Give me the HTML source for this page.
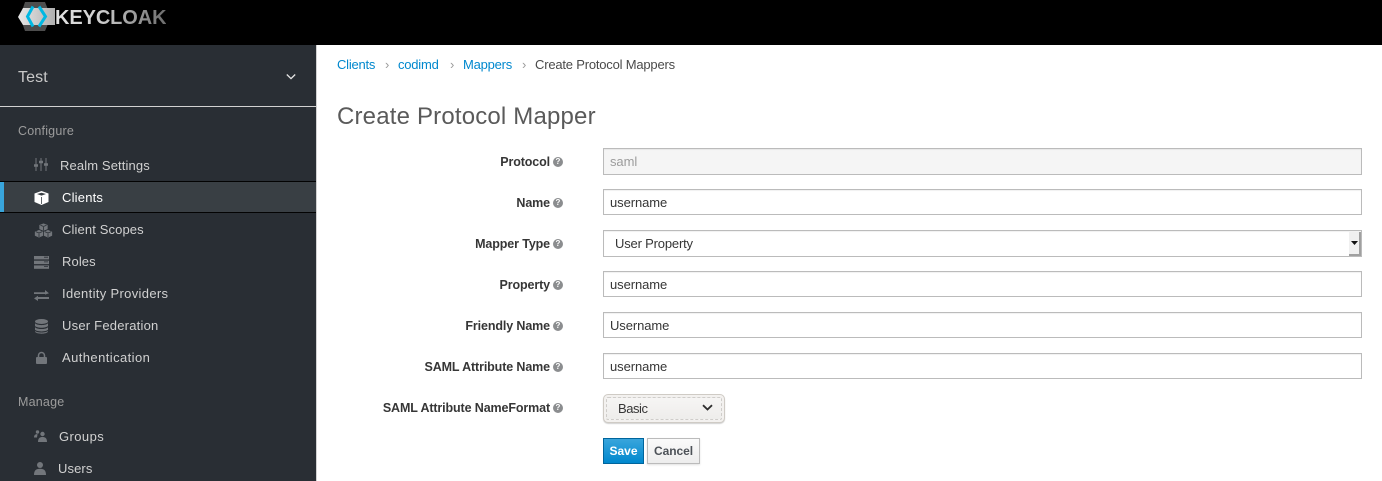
<!DOCTYPE html>
<html><head><meta charset="utf-8"><title>Create Protocol Mapper</title>
<style>
html,body{margin:0;padding:0;width:1382px;height:481px;overflow:hidden;background:#fff}
body{position:relative;font-family:"Liberation Sans",sans-serif;font-size:13px;color:#363636}
.t{position:absolute;white-space:nowrap;line-height:16px}
.abs{position:absolute;box-sizing:border-box}
.nav{color:#d1d1d1;letter-spacing:.15px}
.lnk{color:#0088ce;letter-spacing:-.22px}
.lb{font-weight:bold;font-size:12.5px;right:832px;letter-spacing:-.12px}
.q{position:absolute;left:553px;width:10px;height:10px;border-radius:50%;background:#8b8d8f;color:#fff;font:bold 8px/10px "Liberation Sans",sans-serif;text-align:center}
.in{position:absolute;left:603px;width:759px;box-sizing:border-box;border:1px solid #bbb;height:26px;background:#fff;box-shadow:inset 0 1px 1px rgba(3,3,3,.06)}
.v{left:610px;letter-spacing:-.08px;color:#363636}
svg{position:absolute;overflow:visible}
</style></head><body>
<div class="abs" style="left:0;top:0;width:1382px;height:45px;background:#000"></div>
<svg style="left:17px;top:2px" width="38" height="30" viewBox="0 0 38 30">
<defs><linearGradient id="g" x1="0" x2="1" y1="0" y2="0"><stop offset="0" stop-color="#e8e8e8"/><stop offset="1" stop-color="#b0b0b0"/></linearGradient></defs>
<polygon points="8,0 28,0 34,15 28,29 8,29 3,15" fill="#4d4d4d"/>
<polygon points="6,6 38,6 38,23 6,23 1,15" fill="url(#g)"/>
<path d="M16 4.500 L10.500 14.500 L16 24.500 M22 4.500 L28.500 14.500 L22 24.500" fill="none" stroke="#00b8e3" stroke-width="3"/>
</svg>
<div class="t" style="left:55px;top:6px;font-size:20px;line-height:24px;font-weight:bold;letter-spacing:-.1px;background:linear-gradient(90deg,#e2e2e2 0,#d0d0d0 40%,#6c6c6c 100%);-webkit-background-clip:text;background-clip:text;color:transparent">KEYCLOAK</div>

<div class="abs" style="left:0;top:45px;width:316px;height:436px;background:#292e34"></div>
<div class="abs" style="left:316px;top:45px;width:1px;height:436px;background:#d1d1d1"></div>
<div class="t" style="left:18px;top:69px;font-size:16px;line-height:18px;color:#c8c8c8;letter-spacing:.1px">Test</div>
<svg style="left:286px;top:73px" width="10" height="8"><path d="M.8 1.500 L5 5.600 L9.200 1.500" fill="none" stroke="#e4e4e4" stroke-width="1.300"/></svg>
<div class="abs" style="left:0;top:106px;width:316px;height:1px;background:#d1d1d1"></div>
<div class="t" style="left:18px;top:123px;color:#9c9c9c;letter-spacing:.2px;font-size:12.5px">Configure</div>
<div class="abs" style="left:0;top:181px;width:316px;height:32px;background:#393f44;border-top:1px solid #030303;border-bottom:1px solid #030303"></div>
<div class="abs" style="left:0;top:182px;width:4px;height:30px;background:#39a5dc"></div>

<div class="t nav" style="left:60px;top:158px;letter-spacing:.12px">Realm Settings</div>
<div class="t nav" style="left:62px;top:190px;color:#fff;letter-spacing:.2px">Clients</div>
<div class="t nav" style="left:62px;top:222px;letter-spacing:.12px">Client Scopes</div>
<div class="t nav" style="left:62px;top:254px;letter-spacing:.1px">Roles</div>
<div class="t nav" style="left:62px;top:286px;letter-spacing:.33px">Identity Providers</div>
<div class="t nav" style="left:62px;top:318px;letter-spacing:.22px">User Federation</div>
<div class="t nav" style="left:62px;top:350px;letter-spacing:.42px">Authentication</div>
<div class="t" style="left:18px;top:394px;color:#9c9c9c;letter-spacing:.2px;font-size:12.5px">Manage</div>
<div class="t nav" style="left:59px;top:429px;letter-spacing:.42px">Groups</div>
<div class="t nav" style="left:58px;top:461px;letter-spacing:.1px">Users</div>

<!-- sidebar icons -->
<svg style="left:34px;top:158px" width="14" height="14" fill="none" stroke="#72767b"><path d="M2 0V13M7 0V13M12 0V13" stroke-width="1"/><path d="M0 7.500H4M5 4H9M10 6.500H14" stroke-width="2.400"/></svg>
<svg style="left:34px;top:191px" width="15" height="14"><path d="M7.500 0 L14.500 2.500 V11 L7.500 14 L.5 11 V2.500Z" fill="#fff"/><path d="M3 3 L7.500 1.700 L12 3 L7.500 4.600Z" fill="#393f44"/><path d="M7.500 6 V13" stroke="#393f44" stroke-width=".8"/></svg>
<svg style="left:34px;top:223px" width="19" height="15"><g fill="#72767b" stroke="#292e34" stroke-width=".7"><path d="M9.500 0 L14 1.800 V6.500 L9.500 8.200 L5 6.500 V1.800Z"/><path d="M5 6.500 L9.500 8.500 V13 L5 15 L.5 13 V8.500Z"/><path d="M14 6.500 L18.500 8.500 V13 L14 15 L9.500 13 V8.500Z"/></g><path d="M6.500 2.300L9.500 3.500L12.500 2.300M2 8.800L5 10L8 8.800M11 8.800L14 10L17 8.800M5 10.500V14M14 10.500V14M9.500 4V7.500" fill="none" stroke="#292e34" stroke-width=".8"/></svg>
<svg style="left:34px;top:256px" width="15" height="13" fill="#72767b"><rect width="15" height="3.400"/><rect y="4.700" width="15" height="3.400"/><rect y="9.400" width="15" height="3.400"/><path d="M10 1.200H14M10 5.900H14M10 10.600H14" stroke="#292e34" stroke-width=".8"/></svg>
<svg style="left:34px;top:290px" width="15" height="11" fill="#72767b"><path d="M0 2.200H11V0L15 3.300L11 4.600V4H0Z"/><path d="M15 7H4V5.800L0 8.400L4 11V9H15Z"/></svg>
<svg style="left:35px;top:319px" width="13" height="15" fill="#72767b"><ellipse cx="6.500" cy="2.500" rx="6.500" ry="2.500"/><path d="M0 4.300C2 6.700 11 6.700 13 4.300V7C11 9.300 2 9.300 0 7Z"/><path d="M0 8.200C2 10.600 11 10.600 13 8.200V10.800C11 13 2 13 0 10.800Z"/><path d="M0 12C2 14 11 14 13 12V12.800C11 15.400 2 15.400 0 12.800Z"/></svg>
<svg style="left:36px;top:352px" width="11" height="12" fill="#72767b"><rect y="5" width="11" height="7" rx="1"/><path d="M2.500 5.500V3.500a3 3 0 0 1 6 0V5.500" fill="none" stroke="#72767b" stroke-width="1.500"/></svg>
<svg style="left:34px;top:430px" width="13" height="12" fill="#72767b"><circle cx="3.500" cy="2" r="1.700"/><path d="M0 7.500C0 5 1.500 4 3.500 4.200C3.500 5.500 3 6.500 3 7.500Z"/><circle cx="8.500" cy="4" r="2.200"/><path d="M4 12C4 8 6 7 8.500 7C11 7 13 8 13 12Z"/></svg>
<svg style="left:34px;top:462px" width="12" height="13" fill="#72767b"><circle cx="6" cy="3" r="3"/><path d="M0 13C0 8.500 2 6.800 6 6.800C10 6.800 12 8.500 12 13Z"/></svg>

<!-- breadcrumb -->
<div class="t lnk" style="left:337px;top:57px">Clients</div>
<div class="t" style="left:385px;top:57px;color:#9c9c9c">›</div>
<div class="t lnk" style="left:398px;top:57px">codimd</div>
<div class="t" style="left:450px;top:57px;color:#9c9c9c">›</div>
<div class="t lnk" style="left:463px;top:57px">Mappers</div>
<div class="t" style="left:522px;top:57px;color:#9c9c9c">›</div>
<div class="t" style="left:535px;top:57px;letter-spacing:-.2px;color:#4a4a4a">Create Protocol Mappers</div>
<div class="t" style="left:337px;top:103px;font-size:24px;line-height:28px;color:#5a5a5a;letter-spacing:.18px">Create Protocol Mapper</div>

<!-- labels -->
<div class="t lb" style="top:154px">Protocol</div><div class="q" style="top:157px">?</div>
<div class="t lb" style="top:195px">Name</div><div class="q" style="top:198px">?</div>
<div class="t lb" style="top:236px">Mapper Type</div><div class="q" style="top:239px">?</div>
<div class="t lb" style="top:277px">Property</div><div class="q" style="top:280px">?</div>
<div class="t lb" style="top:318px">Friendly Name</div><div class="q" style="top:321px">?</div>
<div class="t lb" style="top:359px">SAML Attribute Name</div><div class="q" style="top:362px">?</div>
<div class="t lb" style="top:400px">SAML Attribute NameFormat</div><div class="q" style="top:403px">?</div>

<!-- inputs -->
<div class="in" style="top:148px;height:27px;background:#f5f5f5"></div>
<div class="t v" style="top:154px;color:#9c9c9c">saml</div>
<div class="in" style="top:189px"></div><div class="t v" style="top:195px">username</div>
<div class="in" style="top:230px;height:27px"></div><div class="t v" style="top:236px;left:615px;letter-spacing:-.18px">User Property</div>
<div class="abs" style="left:1349px;top:232px;width:12px;height:24px;background:#f0f0f0;border-right:2px solid #a0a0a0;border-bottom:2px solid #a0a0a0"></div>
<svg style="left:1351px;top:241px" width="7" height="4"><path d="M0 0H7L3.500 4Z" fill="#111"/></svg>
<div class="in" style="top:271px"></div><div class="t v" style="top:277px">username</div>
<div class="in" style="top:312px"></div><div class="t v" style="top:318px">Username</div>
<div class="in" style="top:353px"></div><div class="t v" style="top:359px">username</div>

<!-- basic select -->
<div class="abs" style="left:603px;top:394px;width:122px;height:29px;border:1px solid #cfcbc5;border-radius:5px;background:#f3f1ef;box-shadow:0 1px 1px rgba(0,0,0,.18)"></div>
<div class="abs" style="left:606px;top:397px;width:116px;height:23px;border:1px dashed #cfcdca;border-radius:2px;background:linear-gradient(#f6f5f4,#eeedeb)"></div>
<div class="t" style="left:618px;top:401px;letter-spacing:-.45px">Basic</div>
<svg style="left:702px;top:404px" width="11" height="8"><path d="M1 1.200L5.500 5.500L10 1.200" fill="none" stroke="#2e2e2e" stroke-width="1.800"/></svg>

<!-- buttons -->
<div class="abs" style="left:603px;top:438px;width:41px;height:26px;border:1px solid #00659c;background:linear-gradient(#39a5dc,#0088ce);color:#fff;font-weight:bold;font-size:12px;line-height:25px;text-align:center">Save</div>
<div class="abs" style="left:647px;top:438px;width:53px;height:26px;border:1px solid #bbb;background:linear-gradient(#fafafa,#ededed);color:#4d5258;font-weight:bold;font-size:12px;line-height:25px;text-align:center;letter-spacing:-.05px;box-shadow:0 1px 2px rgba(0,0,0,.12)">Cancel</div>
</body></html>
